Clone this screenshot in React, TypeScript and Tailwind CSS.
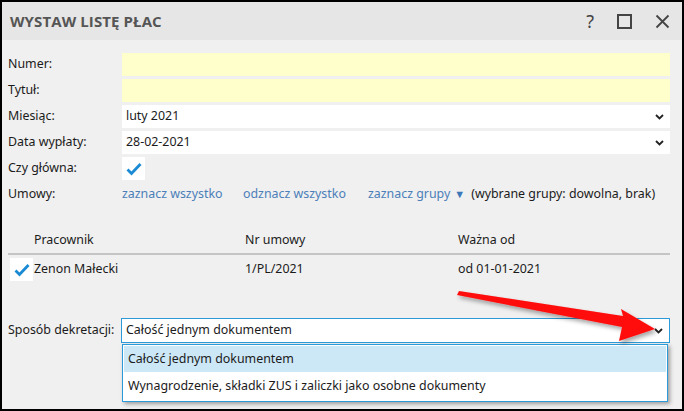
import React from 'react';

const font = { fontFamily: '"Noto Sans", "Open Sans", sans-serif' };

const Chevron = () => (
  <svg width="9" height="6" viewBox="0 0 9 6" className="shrink-0 mr-[2px]">
    <path d="M1 1l3.5 3.5L8 1" fill="none" stroke="#222" strokeWidth="1.8" />
  </svg>
);

const Check = () => (
  <svg width="16" height="14" viewBox="0 0 16 14">
    <path d="M1.5 7.5l4 4L14.5 2" fill="none" stroke="#1a8ad4" strokeWidth="2.8" />
  </svg>
);

const Field: React.FC<{ label: string; children: React.ReactNode }> = ({ label, children }) => (
  <div className="flex items-center h-[23px] mb-[3px]">
    <div className="w-[114px] shrink-0 text-[12.4px] text-[#1b1b1b]">{label}</div>
    {children}
  </div>
);

const App: React.FC = () => {
  return (
    <div className="w-[684px] h-[411px] bg-black p-[2px]" style={font}>
      <div className="relative w-full h-full bg-[#f0f0f0] flex flex-col overflow-hidden">
        {/* title bar */}
        <div className="h-[38px] shrink-0 bg-[#e6e6e6] flex items-center pl-[8px] pr-[12px]">
          <div className="text-[15px] font-bold text-[#555] tracking-[0.1px]" style={{ fontFamily: '"Open Sans", "Noto Sans", sans-serif' }}>
            WYSTAW LISTĘ PŁAC
          </div>
          <div className="ml-auto flex items-center gap-[23px] text-[#444]">
            <span className="text-[18px] leading-none">?</span>
            <span className="block w-[15px] h-[15px] border-2 border-[#444]" />
            <svg width="15" height="15" viewBox="0 0 15 15">
              <path d="M1.5 1.5l12 12M13.5 1.5l-12 12" stroke="#444" strokeWidth="1.8" />
            </svg>
          </div>
        </div>

        <div className="flex-1 pl-[6px] pr-[12px] pt-[13px] text-[12.4px]">
          <Field label="Numer:">
            <div className="flex-1 h-full bg-[#ffffcc]" />
          </Field>
          <Field label="Tytuł:">
            <div className="flex-1 h-full bg-[#ffffcc]" />
          </Field>
          <Field label="Miesiąc:">
            <div className="flex-1 h-full bg-white flex items-center px-[4px] text-[#1b1b1b]">
              <span className="flex-1">luty 2021</span>
              <Chevron />
            </div>
          </Field>
          <Field label="Data wypłaty:">
            <div className="flex-1 h-full bg-white flex items-center px-[4px] text-[#1b1b1b]">
              <span className="flex-1">28-02-2021</span>
              <Chevron />
            </div>
          </Field>
          <Field label="Czy główna:">
            <div className="w-[23px] h-[23px] bg-white flex items-center justify-center">
              <Check />
            </div>
          </Field>
          <div className="flex items-center h-[22px] mt-[1px]">
            <div className="w-[114px] shrink-0 text-[#1b1b1b]">Umowy:</div>
            <span className="text-[#4c7fb8] w-[121px]">zaznacz wszystko</span>
            <span className="text-[#4c7fb8] w-[125px]">odznacz wszystko</span>
            <span className="text-[#4c7fb8]">zaznacz grupy</span>
            <span className="text-[#3a78b8] text-[11px] ml-[4px] mr-[6px]">▼</span>
            <span className="text-[#1b1b1b]">(wybrane grupy: dowolna, brak)</span>
          </div>

          {/* table */}
          <div className="mt-[25px] text-[#1b1b1b]">
            <div className="flex h-[25px] items-center pb-[2px] border-b-2 border-[#c4c4c4]">
              <span className="pl-[26px] w-[237px]">Pracownik</span>
              <span className="w-[213px]">Nr umowy</span>
              <span>Ważna od</span>
            </div>
            <div className="flex h-[29px] items-center">
              <div className="ml-[2px] w-[23px] h-[23px] bg-white flex items-center justify-center">
                <Check />
              </div>
              <span className="pl-[1px] w-[212px]">Zenon Małecki</span>
              <span className="w-[213px]">1/PL/2021</span>
              <span>od 01-01-2021</span>
            </div>
          </div>

          {/* decretation */}
          <div className="mt-[34px] flex items-center h-[25px] text-[#1b1b1b]">
            <div className="w-[113px] shrink-0">Sposób dekretacji:</div>
            <div className="flex-1 h-full bg-white border border-[#2b9ad8] flex items-center px-[4px]">
              <span className="flex-1">Całość jednym dokumentem</span>
              <Chevron />
            </div>
          </div>
          <div className="ml-[114px] mr-[2px] mt-[1px] bg-white border border-[#2b9ad8] shadow-[2px_2px_4px_rgba(0,0,0,0.35)] p-[1px] text-[#1b1b1b]">
            <div className="h-[26px] bg-[#cce8f6] flex items-center px-[4px]">Całość jednym dokumentem</div>
            <div className="h-[28px] flex items-center px-[4px]">Wynagrodzenie, składki ZUS i zaliczki jako osobne dokumenty</div>
          </div>
        </div>

        {/* red annotation arrow */}
        <svg className="absolute left-0 top-0 pointer-events-none" width="680" height="407" viewBox="0 0 680 407">
          <defs>
            <filter id="sh" x="-10%" y="-50%" width="130%" height="200%">
              <feDropShadow dx="2" dy="3" stdDeviation="2" floodColor="#000" floodOpacity="0.35" />
            </filter>
          </defs>
          <path
            d="M455 293 L457 289 L621 314 L619 307 L653 327 L617 339 L620 325 Z"
            fill="#ff0a0a"
            filter="url(#sh)"
          />
        </svg>
      </div>
    </div>
  );
};

export default App;
